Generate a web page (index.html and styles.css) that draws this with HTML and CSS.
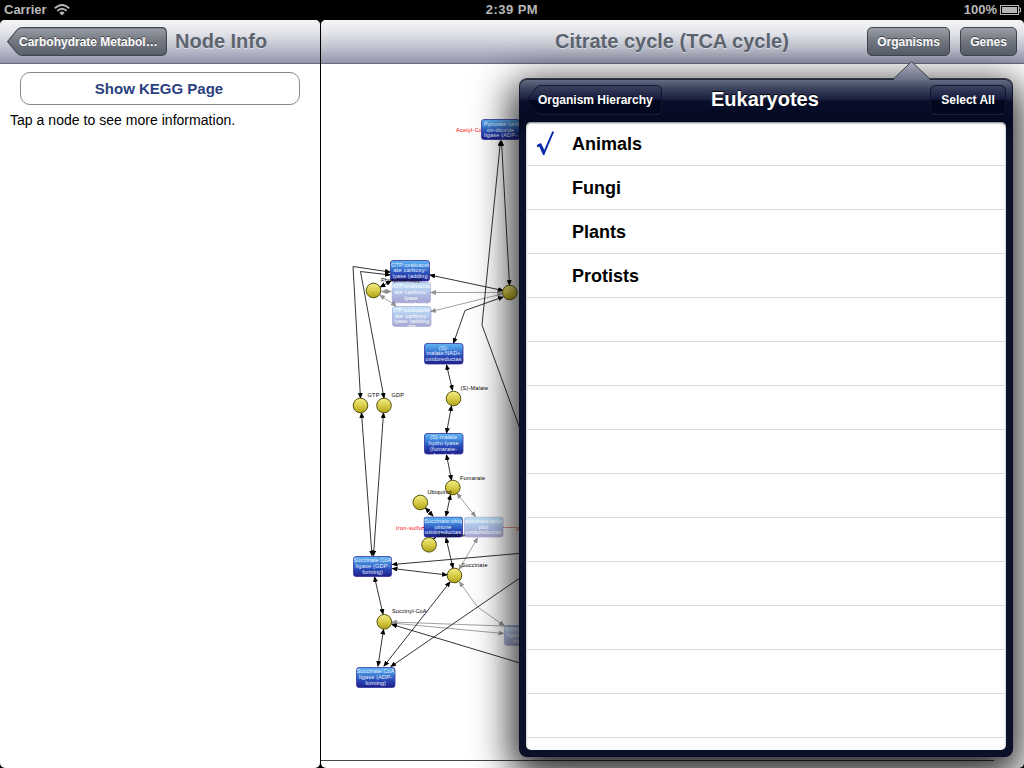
FILE: index.html
```html
<!DOCTYPE html>
<html lang="en">
<head>
<meta charset="utf-8">
<title>Citrate cycle (TCA cycle)</title>
<link rel="stylesheet" href="styles.css">
</head>
<body>
<div class="screen">
  <header class="status">
    <div class="status-left"><span class="carrier">Carrier</span>
      <svg class="wifi" width="16" height="12" viewBox="0 0 16 12" fill="none" stroke="#b4b4b4" stroke-width="1.9"><path d="M.8 4.3Q8-2.5 15.2 4.3M3.3 6.9Q8 2.5 12.7 6.9"/><path d="M5.3 8.7Q8 6.2 10.7 8.7L8 11.6Z" fill="#b4b4b4" stroke="none"/></svg>
    </div>
    <div class="clock">2:39 PM</div>
    <div class="status-right"><span class="percent">100%</span>
      <svg width="21" height="11" viewBox="0 0 21 11"><rect x=".5" y=".5" width="18" height="9" fill="none" stroke="#b8b8b8"/><rect x="2" y="2" width="15" height="6" fill="#b4b4b4"/><path d="M19 3h1.5v4H19" fill="none" stroke="#b8b8b8"/></svg>
    </div>
  </header>
  <main class="split">
    <section class="master">
      <nav class="bar bar-master">
        <button class="back back-gray">
          <svg class="back-shape" width="160" height="29" viewBox="0 0 160 29"><defs><linearGradient id="gray" x2="0" y2="1"><stop stop-color="#9a9ea7"/><stop offset=".5" stop-color="#71767f"/><stop offset="1" stop-color="#5a606e"/></linearGradient></defs><path d="M.6 14.5 10 3Q12 .6 15 .6H154.5Q159.4.6 159.4 5.5V23.5Q159.4 28.4 154.5 28.4H15Q12 28.4 10 26Z" fill="url(#gray)" stroke="#40444d" stroke-width="1.1"/></svg>
          <span class="back-text">Carbohydrate Metabol…</span>
        </button>
        <h1 class="title title-node">Node Info</h1>
      </nav>
      <div class="info">
        <button class="kegg"><span class="kegg-text">Show KEGG Page</span></button>
        <p class="hint">Tap a node to see more information.</p>
      </div>
    </section>
    <section class="detail">
      <nav class="bar bar-detail">
        <h1 class="title title-map">Citrate cycle (TCA cycle)</h1>
        <button class="tool tool-organisms">Organisms</button>
        <button class="tool tool-genes">Genes</button>
      </nav>
      <svg class="map" width="703" height="704" viewBox="321 64 703 704">
        <defs>
          <linearGradient id="blue" x2="0" y2="1"><stop stop-color="#62b5f3"/><stop offset=".3" stop-color="#4389dc"/><stop offset=".65" stop-color="#2848b5"/><stop offset="1" stop-color="#201f89"/></linearGradient>
          <linearGradient id="gold" x2="0" y2="1"><stop stop-color="#f4ed88"/><stop offset=".5" stop-color="#d8cd49"/><stop offset="1" stop-color="#afa017"/></linearGradient>
          <marker id="tip" markerUnits="userSpaceOnUse" markerWidth="6" markerHeight="5" refX="5" refY="2.5" orient="auto-start-reverse"><path d="M0 0 6 2.5 0 5Z"/></marker>
          <marker id="tipf" markerUnits="userSpaceOnUse" markerWidth="6" markerHeight="5" refX="5" refY="2.5" orient="auto-start-reverse"><path d="M0 0 6 2.5 0 5Z" fill="#919191"/></marker>
        </defs>
        <g class="edge faded">
          <path d="M382 291.5H391"/><path d="M431 292.500H502"/><path d="M380 295 396 306"/><path d="M431 311.500 502 294"/>
          <path d="M457 493.500 475.500 516.500"/><path d="M477.500 538 459 569.500"/><path d="M459.500 582 477.500 607 504 625.500"/>
          <path d="M392 622 530 627"/><path d="M392 623 503.500 633.500"/>
        </g>
        <path d="M503 527.500H516" stroke="#d66" stroke-width=".7"/>
        <g class="edge">
          <path d="M500.500 141 482 325 538 478"/>
          <path d="M501.500 141 509.500 285"/>
          <path d="M390 272 353 266.500 360.500 398"/>
          <path d="M390 275 360.500 271.500 384 398"/>
          <path d="M380.500 287 391 281"/><path d="M430 275 503 290.500"/>
          <path d="M503 297 465 310.500 453.500 343"/>
          <path d="M446.500 365 452.500 390"/><path d="M451.500 406 446.500 433"/><path d="M446.500 455 451.500 480"/>
          <path d="M450.500 495 446 516"/><path d="M425.500 508 433 516"/><path d="M446 538 453 568"/>
          <path d="M361.500 413 372 555.500"/><path d="M383.500 413 373.500 555.500"/>
          <path d="M392.500 564.500 530 552.500"/><path d="M392.500 568.500 447 575"/>
          <path d="M374.500 577 383 614"/><path d="M383.500 629.500 378 666"/>
          <path d="M450 582 384 666"/><path d="M391 666.500 530 571"/><path d="M392 624.500 530 666"/>
        </g>
        <path d="M436 537 431 541" stroke="#111" stroke-width="1.500"/>
        <g class="fault"><text x="456" y="132" textLength="30">Acetyl-CoA</text><text x="396" y="529.500" textLength="28">Iron-sulfur</text><path d="M422 527.500H424" stroke="#f01818"/><text x="516.500" y="529.500">p</text></g>
        <g>
          <svg class="node" x="481" y="119" width="39" height="21"><rect class="box" x=".5" y=".5" width="38" height="20" rx="2.500"/><text x="20.500" y="6.500" textLength="35">Pyruvate carb</text><text x="19.500" y="12.500" textLength="27">on-dioxide</text><text x="19.500" y="18" textLength="33">ligase (ADP-</text></svg>
          <svg class="node" x="390" y="260" width="40" height="22"><rect class="box" x=".5" y=".5" width="39" height="20.500" rx="2.500"/><text x="20" y="6.500" textLength="38">GTP:oxaloacet</text><text x="20" y="12" textLength="33">ate carboxy-</text><text x="20" y="17.500" textLength="35">lyase (adding</text></svg>
          <svg class="node ghost" x="391.500" y="282" width="40" height="22"><rect class="box" x=".5" y=".5" width="38.500" height="20.500" rx="2.500"/><text x="19.500" y="6" textLength="38">ATP:oxaloacet</text><text x="19.500" y="11.500" textLength="33">ate carboxy-</text><text x="19.500" y="17.500">lyase</text><text x="19.500" y="23.500">(transphos)</text></svg>
          <svg class="node ghost" x="392" y="306" width="40" height="22"><rect class="box" x=".5" y=".5" width="38.500" height="20" rx="2.500"/><text x="19.500" y="6" textLength="36">ITP:oxaloacet</text><text x="19.500" y="11.500" textLength="33">ate carboxy-</text><text x="19.500" y="17" textLength="35">lyase (adding</text><text x="19.500" y="22.500">ITP</text></svg>
          <svg class="node" x="424" y="343" width="40" height="22"><rect class="box" x=".5" y=".5" width="38.500" height="20.500" rx="2.500"/><text x="19.500" y="6.500">(S)-</text><text x="19.500" y="12" textLength="34">malate:NAD+</text><text x="19.500" y="17.500" textLength="36">oxidoreductas</text></svg>
          <svg class="node" x="424" y="433" width="40" height="22"><rect class="box" x=".5" y=".5" width="38.500" height="20.500" rx="2.500"/><text x="19.500" y="6" textLength="27">(S)-malate</text><text x="19.500" y="12" textLength="30">hydro-lyase</text><text x="19.500" y="18" textLength="27">(fumarate-</text><text x="19.500" y="24">forming)</text></svg>
          <svg class="node" x="423.500" y="516.500" width="40" height="22"><rect class="box" x=".5" y=".5" width="38.500" height="20" rx="2.500"/><text x="19.500" y="6" textLength="38">Succinate:ubiq</text><text x="19.500" y="12">uinone</text><text x="19.500" y="17.500" textLength="36">oxidoreductas</text></svg>
          <svg class="node ghost" x="464" y="516.500" width="40" height="22"><rect class="box" x=".5" y=".5" width="38.500" height="20" rx="2.500"/><text x="19.500" y="6" textLength="38">succinate:acce</text><text x="19.500" y="12">ptor</text><text x="19.500" y="17.500" textLength="36">oxidoreductas</text></svg>
          <svg class="node" x="353" y="556" width="40" height="22"><rect class="box" x=".5" y=".5" width="38" height="20" rx="2.500"/><text x="19.500" y="6" textLength="38">Succinate:CoA</text><text x="19.500" y="12" textLength="34">ligase (GDP-</text><text x="19.500" y="18">forming)</text></svg>
          <svg class="node ghost" x="504" y="625" width="40" height="22"><rect class="box" x=".5" y=".5" width="38" height="20" rx="2.500"/><text x="19.500" y="6" textLength="38">Succinate:CoA</text><text x="19.500" y="12" textLength="33">ligase (ADP-</text><text x="19.500" y="18">forming)</text></svg>
          <svg class="node" x="356" y="667" width="40" height="22"><rect class="box" x=".5" y=".5" width="38.500" height="20" rx="2.500"/><text x="19.500" y="6" textLength="38">Succinate:CoA</text><text x="19.500" y="12" textLength="33">ligase (ADP-</text><text x="19.500" y="18">forming)</text></svg>
        </g>
        <g class="dots">
          <circle cx="373.500" cy="290.500" r="7.300"/><circle cx="509.800" cy="292.500" r="7.300"/><circle cx="360.500" cy="405.500" r="7.300"/><circle cx="384" cy="405.500" r="7.300"/>
          <circle cx="453.500" cy="398.500" r="7.300"/><circle cx="452.800" cy="487.500" r="7.300"/><circle cx="420.300" cy="502.500" r="7.300"/><circle cx="429" cy="544.800" r="7.300"/>
          <circle cx="454.500" cy="575.500" r="7.300"/><circle cx="384.300" cy="621.800" r="7.300"/>
        </g>
        <g class="names">
          <text x="381" y="282" textLength="41">Phosphoenolpyr</text><text x="367.500" y="397" textLength="12">GTP</text><text x="391.500" y="397" textLength="12.500">GDP</text><text x="460.500" y="390" textLength="27.500">(S)-Malate</text><text x="460" y="479.500" textLength="25">Fumarate</text><text x="427.500" y="494" textLength="24">Ubiquinol</text><text x="437" y="536.500" textLength="28">Ubiquinone</text><text x="461.500" y="567" textLength="26">Succinate</text><text x="392" y="613" textLength="34.500">Succinyl-CoA</text>
        </g>
        <path d="M321 760.500H994" stroke="#444"/>
      </svg>
    </section>
  </main>
  <aside class="popover">
    <svg class="pointer" width="36" height="19" viewBox="0 0 36 19"><defs><linearGradient id="peak" x2="0" y2="1"><stop stop-color="#a9acb9"/><stop offset="1" stop-color="#697087"/></linearGradient></defs><path d="M0 19V17.500L17.500.6 35.500 17.500V19Z" fill="url(#peak)"/><path d="M0 17.500 17.500.6 35.500 17.500" fill="none" stroke="#3c404b"/></svg>
    <header class="pop-head">
      <button class="back back-navy">
        <svg class="back-shape" width="136" height="30" viewBox="0 0 136 30"><defs><linearGradient id="navy" x2="0" y2="1"><stop stop-color="#3d4460"/><stop offset=".5" stop-color="#11173a"/><stop offset=".51" stop-color="#02071d"/><stop offset="1" stop-color="#030821"/></linearGradient></defs><path d="M.6 15 10 3Q12 .6 15 .6H130.500Q135.400.6 135.400 5.500V24Q135.400 29 130.500 29H15Q12 29 10 26.500Z" fill="url(#navy)" stroke="#10152c"/><path d="M12 28.500 15 29.500H131Q135.500 29 135.500 24" fill="none" stroke="#1c2238" stroke-width=".8"/></svg>
        <span class="back-text">Organism Hierarchy</span>
      </button>
      <h2 class="pop-title">Eukaryotes</h2>
      <button class="select">Select All</button>
    </header>
    <ul class="list">
      <li class="row"><span class="check"><svg width="20" height="25" viewBox="0 0 20 25"><path d="M1.200 14.800 4.400 13.200 8 22 17.200.6" fill="none" stroke="#0a2aa8" stroke-width="1.900"/><path d="M.8 14.500 4.900 12.400 8.700 19.500 8.300 24H7Q4.500 18 3.200 15.500L1.600 16.200Z" fill="#0a2aa8"/></svg></span>Animals</li>
      <li class="row"><span class="check"></span>Fungi</li>
      <li class="row"><span class="check"></span>Plants</li>
      <li class="row"><span class="check"></span>Protists</li>
      <li class="row"></li><li class="row"></li><li class="row"></li><li class="row"></li><li class="row"></li>
      <li class="row"></li><li class="row"></li><li class="row"></li><li class="row"></li><li class="row"></li>
    </ul>
  </aside>
</div>
</body>
</html>
```
FILE: styles.css
```css
* { box-sizing: border-box; }
body { margin: 0; background: #000; font-family: "Liberation Sans", Arial, sans-serif; }
button { border: 0; padding: 0; margin: 0; background: none; font: inherit; }
h1, h2, p, ul { margin: 0; padding: 0; }
.screen { position: relative; width: 1024px; height: 768px; overflow: hidden; background: #000; display: flex; flex-direction: column; }
.status { height: 20px; flex: none; display: grid; grid-template-columns: 1fr auto 1fr; align-items: center; padding: 0 3px 0 4px; color: #b8b8b8; font-size: 13px; font-weight: bold; line-height: 20px; }
.status-left { display: flex; align-items: center; gap: 7px; }
.status-right { display: flex; align-items: center; justify-content: flex-end; gap: 3px; }
.clock { letter-spacing: .45px; margin-right: 1px; }
.percent { font-size: 13px; }
.split { display: flex; gap: 1px; flex: 1; min-height: 0; }
.master { width: 320px; background: #fff; border-radius: 5px; overflow: hidden; }
.detail { width: 703px; background: #fff; border-radius: 5px; overflow: hidden; }
.bar { height: 44px; display: flex; align-items: center; background: linear-gradient(#f5f5f8, #e3e4e9 30%, #c4c6d1 60%, #9396ac); border-bottom: 1px solid #686b80; }
.bar-master { padding-left: 7px; gap: 8px; }
.bar-detail { padding: 0 7px 0 234px; }
.title { font-size: 20px; line-height: 40px; padding-bottom: 2px; color: #5c6470; text-shadow: 0 1px 0 rgba(255,255,255,.5); white-space: nowrap; }
.title-map { width: 312px; }
.back { position: relative; display: block; color: #fff; font-size: 12px; font-weight: bold; text-align: left; white-space: nowrap; text-shadow: 0 -1px 0 rgba(0,0,0,.5); }
.back-shape { position: absolute; left: 0; top: 0; }
.back-text { position: relative; }
.back-gray { width: 160px; height: 29px; padding-left: 12px; }
.tool { height: 29px; border: 1px solid #40444d; border-radius: 5px; background: linear-gradient(#9a9ea7, #71767f 50%, #5a606e); color: #fff; font-size: 12px; font-weight: bold; text-shadow: 0 -1px 0 rgba(0,0,0,.5); }
.tool-organisms { width: 83px; margin-right: 10px; }
.tool-genes { width: 57px; }
.info { padding: 8px 10px; }
.kegg { display: block; width: 280px; height: 33px; margin: 0 auto; padding-right: 2px; border: 1px solid #888; border-radius: 10px; background: #fff; color: #2b4180; font-size: 15px; font-weight: bold; }
.hint { margin-top: 7px; font-size: 14px; line-height: 17px; letter-spacing: .03px; color: #000; }
.map { display: block; }
.map text { font-family: "Liberation Sans", Arial, sans-serif; }
.edge { fill: none; stroke: #111; stroke-width: .85; }
.edge path { marker-start: url(#tip); marker-end: url(#tip); }
.edge.faded { stroke: #919191; }
.edge.faded path { marker-start: url(#tipf); marker-end: url(#tipf); }
.box { fill: url(#blue); stroke: #3434a0; stroke-width: .8; }
.node { overflow: hidden; }
.node text { font-size: 5.6px; fill: #e7f2ff; text-anchor: middle; }
.ghost { opacity: .38; }
.ghost text { fill: #fff; }
.dots { fill: url(#gold); stroke: #55510f; stroke-width: 1; }
.names { font-size: 5.6px; fill: #000; }
.fault { font-size: 5.6px; fill: #f00; }
.popover { position: absolute; left: 519px; top: 78px; width: 494px; height: 679px; padding: 0 7px 7px 7px; border: 1px solid #343844; border-width: 1px 0 0; border-radius: 8px; background: linear-gradient(#686f86, #3a415c 10px, #161c3b 21px, #080d28 22px, #050a23 43px, #0b1129 60px); box-shadow: inset 0 0 0 1px rgba(8,12,32,.7), 0 12px 38px 7px rgba(0,0,0,.86); }
.pointer { position: absolute; left: 375px; top: -18px; }
.pop-head { height: 43px; display: flex; align-items: center; padding-bottom: 1px; }
.back-navy { width: 136px; height: 30px; padding: 0 0 1px 12px; }
.pop-title { margin-left: 49px; width: 155px; color: #fff; font-size: 20px; line-height: 36px; padding-bottom: 3px; text-shadow: 0 -1px 0 #000; }
.select { margin-left: 64px; width: 76px; height: 30px; padding-bottom: 1px; flex: none; border: 1px solid #10152c; border-bottom-color: #1c2238; border-radius: 6px; background: linear-gradient(#3d4460, #11173a 50%, #02071d 51%, #030821); color: #fff; font-size: 12px; font-weight: bold; }
.list { height: 628px; overflow: hidden; list-style: none; background: #fff; border-radius: 5px; box-shadow: inset 0 1px 2px #777; }
.row { height: 44px; padding-top: 2px; border-bottom: 1px solid #d9d9d9; display: flex; align-items: center; color: #000; font-size: 18px; font-weight: bold; }
.check { width: 36px; height: 25px; margin: -2px 0 0 10px; }
```
